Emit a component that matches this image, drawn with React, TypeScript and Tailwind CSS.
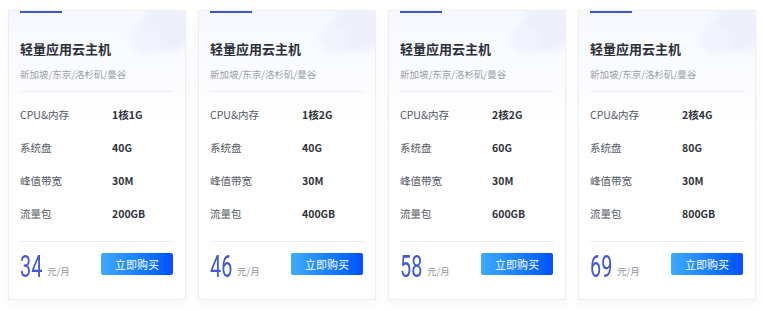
import React from "react";

type Plan = { cpu: string; disk: string; bw: string; traffic: string; price: string };

const plans: Plan[] = [
  { cpu: "1核1G", disk: "40G", bw: "30M", traffic: "200GB", price: "34" },
  { cpu: "1核2G", disk: "40G", bw: "30M", traffic: "400GB", price: "46" },
  { cpu: "2核2G", disk: "60G", bw: "30M", traffic: "600GB", price: "58" },
  { cpu: "2核4G", disk: "80G", bw: "30M", traffic: "800GB", price: "69" },
];

function Row({ label, value }: { label: string; value: string }) {
  return (
    <div className="flex h-[33px] items-center">
      <span className="w-[92px] text-[10.5px] text-[#555a63]">{label}</span>
      <span className="text-[10.5px] font-semibold text-[#2f333b]">{value}</span>
    </div>
  );
}

function Card({ p }: { p: Plan }) {
  return (
    <div className="relative h-[290px] w-[178px] shrink-0 overflow-hidden border border-[#eceef3] bg-linear-to-b from-[#f6f8fe] via-white via-40% to-white shadow-[0_4px_10px_rgba(30,40,80,0.04)]">
      <div className="absolute right-[-8px] top-[-4px] h-[44px] w-[52px] rounded-full bg-[#edf0fb] blur-[3px]" />
      <div className="absolute right-[24px] top-[14px] h-[28px] w-[30px] rounded-full bg-[#f0f2fc] blur-[3px]" />
      <div className="absolute left-[11px] top-[-1px] h-[3px] w-[42px] bg-[#3c56cc]" />
      <div className="relative px-[11px] pt-[29px]">
        <div className="h-[18px] text-[13px] font-bold leading-[18px] text-[#2c3038]">轻量应用云主机</div>
        <div className="mt-[9px] h-[14px] text-[9.5px] leading-[14px] text-[#9a9ea6]">新加坡/东京/洛杉矶/曼谷</div>
        <div className="mt-[10px] h-px bg-[#eceef2]" />
        <div className="mt-[6px]">
          <Row label="CPU&内存" value={p.cpu} />
          <Row label="系统盘" value={p.disk} />
          <Row label="峰值带宽" value={p.bw} />
          <Row label="流量包" value={p.traffic} />
        </div>
        <div className="mt-[11px] h-px bg-[#eceef2]" />
        <div className="mt-[11px] flex h-[22px] items-end justify-between">
          <div className="flex items-end">
            <span className="relative inline-block h-[22px] w-[27px]">
              <span className="absolute bottom-[-7px] left-0 origin-left scale-x-[0.64] font-['Roboto',sans-serif] text-[31px] font-normal leading-none text-[#4157d3]">
                {p.price}
              </span>
            </span>
            <span className="mb-[-1px] text-[9.5px] leading-none text-[#8e929a]">元/月</span>
          </div>
          <button className="mr-[1px] h-[22px] w-[72px] rounded-[2px] bg-linear-to-r from-[#3faafb] to-[#0a4ffe] text-[11px] text-white">
            立即购买
          </button>
        </div>
      </div>
    </div>
  );
}

export default function App() {
  return (
    <div className="h-[311px] w-[763px] overflow-hidden bg-white font-['Noto_Sans_CJK_SC','Noto_Sans',sans-serif]">
      <div className="flex gap-[12px] pl-[8px] pt-[10px]">
        {plans.map((p, i) => (
          <Card key={i} p={p} />
        ))}
      </div>
    </div>
  );
}
